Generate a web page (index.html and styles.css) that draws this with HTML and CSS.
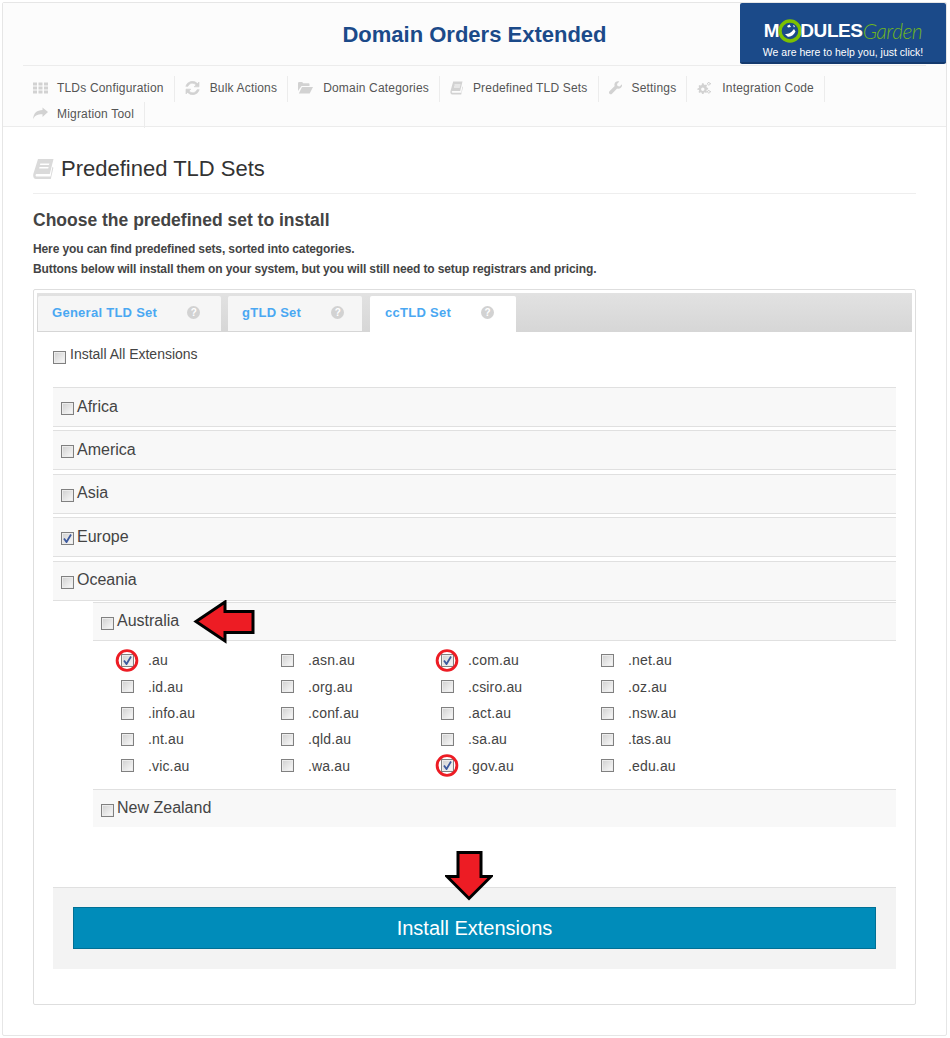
FILE: index.html
```html
<!DOCTYPE html>
<html lang="en">
<head>
<meta charset="utf-8">
<title>Predefined TLD Sets</title>
<link rel="stylesheet" href="styles.css">
</head>
<body>
<div class="frame">
  <header class="top">
    <div class="top-inner"><h1 class="app-title">Domain Orders Extended</h1></div>
    <a class="logo">
      <span class="logo-mark"><span class="w">M</span><svg class="ring" viewBox="0 0 24 24" width="24" height="24"><circle cx="12" cy="12" r="10" fill="#1b4a89" stroke="#7cc100" stroke-width="3.400"/><path d="M7 15c4 0 6-1 9-5l1.500 2.500c-1.500 3.500-5 6-8 5zM9 7l2.500-1.500L13 8l-3 .5zM15 6l2 1-1 1.500z" fill="#fff"/></svg><span class="w">DULES</span><span class="g">Garden</span></span>
      <span class="logo-sub">We are here to help you, just click!</span>
    </a>
  </header>
  <nav class="nav">
    <a class="nav-item"><svg class="ico ico-first" viewBox="0 0 15 14"><path d="M0 1.500h4v3H0zM5.500 1.500h4v3h-4zM11 1.500h4v3h-4zM0 5.500h4v3H0zM5.500 5.500h4v3h-4zM11 5.500h4v3h-4zM0 9.500h4v3H0zM5.500 9.500h4v3h-4zM11 9.500h4v3h-4z"/></svg>TLDs Configuration</a>
    <a class="nav-item"><svg class="ico ico-bold" viewBox="0 0 15 14"><path d="M14 1v4.800H9.200l1.800-1.800A4.700 4.700 0 0 0 3 5.300H.8A6.800 6.800 0 0 1 12.400 2.600zM1 13V8.200h4.800L4 10a4.700 4.700 0 0 0 8-1.300h2.200A6.800 6.800 0 0 1 2.600 11.400z"/></svg>Bulk Actions</a>
    <a class="nav-item"><svg class="ico" viewBox="0 0 15 14"><path d="M0 10V2.300C0 1.600.500 1 1.200 1h3l1 1.300h5.300c.7 0 1 .5 1 1.100V5H3.500L0 10zM.8 12.500 4 6h11l-3.300 6.500z"/></svg>Domain Categories</a>
    <a class="nav-item"><svg class="ico ico-narrow" viewBox="0 0 13 13"><path d="M3.200 0h9.300l-2.300 9.500H2.400c-.9 0-1 1.800.2 1.800h8.700l1.100-6.300.6.600-1.800 7.400H2C.5 13 .1 11.200.5 9.600zM4.500 3v1h5.800l.2-1zM4 5v1h5.800l.2-1z"/></svg>Predefined TLD Sets</a>
    <a class="nav-item"><svg class="ico ico-narrow" viewBox="0 0 13 14"><path d="M13 3.200 10.600 5.500 8.500 5 8 2.900 10.300.5C8.400-.4 5.900.6 5.500 3c-.2.800 0 1.500.2 2.100L.5 10.300c-.7.700-.7 1.800 0 2.500s1.800.7 2.500 0l5.100-5.300c2.700.9 5.700-1.400 4.900-4.300z"/></svg>Settings</a>
    <a class="nav-item"><svg class="ico" viewBox="0 0 15 14"><path d="M5 2.200h1.600l.3 1.300 1 .5 1.200-.6 1 1.100-.7 1.100.4 1 1.300.3v1.600l-1.300.3-.4 1 .7 1.100-1.100 1.100-1.100-.7-1 .4-.3 1.300H5l-.3-1.300-1-.4-1.100.7-1.100-1.100.7-1.100-.4-1L.5 9V7.400l1.300-.3.4-1-.7-1.100 1.100-1.100 1.100.6 1-.5zM5.800 6.500a1.700 1.700 0 1 0 0 3.400 1.700 1.700 0 0 0 0-3.400zM12.300 1l.6.900 1.100.2v1.200l-1.100.3-.6.9h-1.200l-.5-.9-.6-.3V2.100l.6-.2.5-.9zM11.700 2a.8.800 0 1 0 0 1.600.8.800 0 0 0 0-1.600zM12.300 9l.6.900 1.100.2v1.200l-1.100.3-.6.9h-1.200l-.5-.9-.6-.3v-1.200l.6-.2.5-.9zM11.700 10a.8.800 0 1 0 0 1.600.8.800 0 0 0 0-1.600z"/></svg>Integration Code</a>
    <a class="nav-item"><svg class="ico ico-first" viewBox="0 0 15 14"><path d="M15 5 9.500.5v2.600C4 3.300.5 6 0 12.500c1.300-3.500 4-5.200 9.500-5.200v2.600z"/></svg>Migration Tool</a>
  </nav>
  <main class="content">
    <h2 class="page-title"><svg class="title-ico" viewBox="0 0 21 20"><path d="M5 0h15.500l-3.700 15H3.700c-1.500 0-1.600 2.600.3 2.600h13.600l1.800-9.800 1 .9L17.800 20H3c-2.400 0-3.300-2.600-2.600-5.200zM7.300 4.500 7 6h9l.4-1.500zM6.500 8 6.200 9.500h9L15.600 8z"/></svg>Predefined TLD Sets</h2>
    <h3 class="sub-title">Choose the predefined set to install</h3>
    <p class="intro">Here you can find predefined sets, sorted into categories.<br>Buttons below will install them on your system, but you will still need to setup registrars and pricing.</p>
    <section class="panel">
      <div class="tabs">
        <a class="tab tab-general">General TLD Set<span class="help">?</span></a>
        <a class="tab tab-gtld">gTLD Set<span class="help">?</span></a>
        <a class="tab tab-active">ccTLD Set<span class="help">?</span></a>
      </div>
      <div class="tab-body">
        <label class="all"><input class="cb" type="checkbox">Install All Extensions</label>
        <div class="group"><label><input class="cb" type="checkbox">Africa</label></div>
        <div class="group"><label><input class="cb" type="checkbox">America</label></div>
        <div class="group"><label><input class="cb" type="checkbox">Asia</label></div>
        <div class="group"><label><input class="cb" type="checkbox" checked>Europe</label></div>
        <div class="group group-last"><label><input class="cb" type="checkbox">Oceania</label></div>
        <div class="country"><label><input class="cb" type="checkbox">Australia</label></div>
        <div class="tlds">
          <label class="tld"><input class="cb" type="checkbox" checked>.au</label>
          <label class="tld"><input class="cb" type="checkbox">.asn.au</label>
          <label class="tld"><input class="cb" type="checkbox" checked>.com.au</label>
          <label class="tld"><input class="cb" type="checkbox">.net.au</label>
          <label class="tld"><input class="cb" type="checkbox">.id.au</label>
          <label class="tld"><input class="cb" type="checkbox">.org.au</label>
          <label class="tld"><input class="cb" type="checkbox">.csiro.au</label>
          <label class="tld"><input class="cb" type="checkbox">.oz.au</label>
          <label class="tld"><input class="cb" type="checkbox">.info.au</label>
          <label class="tld"><input class="cb" type="checkbox">.conf.au</label>
          <label class="tld"><input class="cb" type="checkbox">.act.au</label>
          <label class="tld"><input class="cb" type="checkbox">.nsw.au</label>
          <label class="tld"><input class="cb" type="checkbox">.nt.au</label>
          <label class="tld"><input class="cb" type="checkbox">.qld.au</label>
          <label class="tld"><input class="cb" type="checkbox">.sa.au</label>
          <label class="tld"><input class="cb" type="checkbox">.tas.au</label>
          <label class="tld"><input class="cb" type="checkbox">.vic.au</label>
          <label class="tld"><input class="cb" type="checkbox">.wa.au</label>
          <label class="tld"><input class="cb" type="checkbox" checked>.gov.au</label>
          <label class="tld"><input class="cb" type="checkbox">.edu.au</label>
        </div>
        <div class="country country-nz"><label><input class="cb" type="checkbox">New Zealand</label></div>
        <div class="actions"><button class="install" type="button">Install Extensions</button></div>
      </div>
    </section>
  </main>
</div>
<svg class="mark arrow-left" viewBox="0 0 62 44"><path d="M3 21.500 32 2v9.500h28v21H32V41z" fill="#ed1c24" stroke="#000" stroke-width="3"/></svg>
<svg class="mark arrow-down" viewBox="0 0 48 50"><path d="M13 1.500h23v24h10L24 47.500 2 25.500h11z" fill="#ed1c24" stroke="#000" stroke-width="3"/></svg>
<svg class="mark ring-a" viewBox="0 0 24 24"><circle cx="12" cy="12" r="10.300" fill="none" stroke="#ed1c24" stroke-width="3"/></svg>
<svg class="mark ring-b" viewBox="0 0 24 24"><circle cx="12" cy="12" r="10.300" fill="none" stroke="#ed1c24" stroke-width="3"/></svg>
<svg class="mark ring-c" viewBox="0 0 24 24"><circle cx="12" cy="12" r="10.300" fill="none" stroke="#ed1c24" stroke-width="3"/></svg>
</body>
</html>
```
FILE: styles.css
```css
* { box-sizing: border-box; }
html, body { margin: 0; padding: 0; }
body {
  position: relative;
  width: 950px;
  height: 1038px;
  overflow: hidden;
  padding: 2px 3px 2px 2px;
  background: #fff;
  font-family: "Liberation Sans", Arial, sans-serif;
  color: #444;
}
.frame {
  position: relative;
  height: 1034px;
  background: #fff;
  border: 1px solid #e6e6e6;
  border-radius: 2px;
}
.top {
  height: 63px;
  padding: 0 20px;
  background: #fcfcfc;
}
.top-inner {
  height: 63px;
  border-bottom: 1px solid #ececec;
}
.app-title {
  margin: 0;
  padding-top: 19px;
  text-align: center;
  font-size: 22px;
  line-height: 26px;
  font-weight: 700;
  color: #1b4a89;
}
.logo {
  position: absolute;
  top: 0;
  right: 0;
  width: 206px;
  height: 61px;
  background: #1b4a89;
  border-bottom: 2px solid #143a6e;
  border-radius: 2px;
  display: flex;
  flex-direction: column;
  align-items: center;
  padding-top: 16px;
}
.logo-mark {
  display: flex;
  align-items: center;
  height: 24px;
  font-size: 19px;
  line-height: 24px;
  letter-spacing: -0.4px;
}
.logo-mark .w { color: #fff; font-weight: 700; }
.logo-mark .g {
  color: #6fb51f;
  font-family: Lato, "Liberation Sans", sans-serif;
  font-size: 21px;
  font-style: italic;
  font-weight: 300;
  letter-spacing: -0.5px;
}
.ring { margin: 0 -2px 0 -1px; flex: none; }
.logo-sub { margin-top: 3px; font-size: 10.500px; line-height: 13px; color: #fff; }
.nav {
  display: flex;
  flex-wrap: wrap;
  align-content: flex-start;
  height: 61px;
  padding: 10px 20px 0;
  background: #fcfcfc;
  border-bottom: 1px solid #ececec;
}
.nav-item {
  display: flex;
  align-items: center;
  height: 26px;
  padding: 0 10px 2px;
  font-size: 12px;
  letter-spacing: 0.18px;
  color: #555;
  border-right: 1px solid #ececec;
}
.ico { width: 15px; height: 14px; margin-right: 10px; fill: #d2d2d2; flex: none; }
.ico-first { margin-right: 9px; }
.ico-narrow { width: 13px; }
.ico-bold { stroke: #d2d2d2; stroke-width: 0.7; }
.content { padding: 0 30px; }
.page-title {
  display: flex;
  align-items: center;
  height: 67px;
  margin: 0;
  padding-top: 18px;
  font-size: 22px;
  font-weight: 400;
  color: #333;
  border-bottom: 1px solid #eee;
}
.title-ico { width: 21px; height: 20px; margin-right: 7px; fill: #dadada; }
.sub-title {
  margin: 16px 0 0;
  font-size: 17.500px;
  line-height: 20px;
  font-weight: 700;
  color: #444;
}
.intro {
  margin: 9px 0 0;
  font-size: 12px;
  line-height: 20px;
  font-weight: 700;
  letter-spacing: -0.115px;
  color: #444;
}
.panel {
  height: 716px;
  margin-top: 10px;
  padding: 3px;
  border: 1px solid #dedede;
  border-radius: 2px;
}
.tabs {
  display: flex;
  height: 39px;
  padding: 3px 0 0 1px;
  background: linear-gradient(#e2e2e2, #d6d6d6);
}
.tab {
  display: flex;
  align-items: center;
  height: 35px;
  padding: 0 0 3px 14px;
  font-size: 13px;
  font-weight: 700;
  letter-spacing: 0.27px;
  color: #4aa8f2;
  background: #f6f6f6;
  border-radius: 2px 2px 0 0;
}
.tab-general { width: 183px; margin-right: 7px; }
.tab-gtld { width: 134px; margin-right: 8px; }
.tab-active { width: 146px; height: 36px; background: #fff; padding-left: 15px; }
.help {
  display: block;
  width: 13px;
  height: 13px;
  margin-left: 30px;
  border-radius: 50%;
  background: #d2d2d2;
  color: #fff;
  font-size: 10px;
  line-height: 13px;
  text-align: center;
  letter-spacing: 0;
}
.tab-body { padding: 0 16px; }
.cb {
  appearance: none;
  -webkit-appearance: none;
  display: inline-block;
  width: 13px;
  height: 13px;
  margin: 0;
  border: 1px solid #808080;
  box-shadow: inset 0 0 0 1px #ececec;
  background: linear-gradient(135deg, #cfcfcf, #fbfbfb);
  flex: none;
}
.cb:checked {
  background:
    url("data:image/svg+xml,%3Csvg xmlns='http://www.w3.org/2000/svg' viewBox='0 0 13 13'%3E%3Cpath d='M3 6.500 5.500 10 10 2.500' fill='none' stroke='%233d5a9e' stroke-width='1.800'/%3E%3C/svg%3E") center/13px no-repeat,
    linear-gradient(135deg, #cfcfcf, #fbfbfb);
}
.all {
  display: flex;
  align-items: flex-start;
  height: 55px;
  padding-top: 14px;
  font-size: 14px;
  line-height: 16px;
}
.all .cb { margin: 5px 4px 0 0; }
.group {
  height: 40px;
  margin-bottom: 3.400px;
  padding-left: 8px;
  background: #f8f8f8;
  border-top: 1px solid #e0e0e0;
  border-bottom: 1px solid #e0e0e0;
  font-size: 16px;
}
.group label, .country label { display: flex; align-items: center; height: 37px; }
.group .cb, .country .cb { margin: 4px 3px 0 0; }
.group-last { margin-bottom: 1.400px; }
.country {
  height: 39px;
  margin-left: 40px;
  padding-left: 8px;
  background: #f8f8f8;
  border-top: 1px solid #e0e0e0;
  border-bottom: 1px solid #e0e0e0;
  font-size: 16px;
}
.country-nz { height: 38px; border-bottom: 0; }
.tlds {
  display: grid;
  grid-template-columns: repeat(4, 160px);
  grid-auto-rows: 26.300px;
  height: 148px;
  margin-left: 40px;
  padding: 6.400px 0 0 28px;
}
.tld {
  display: flex;
  align-items: center;
  font-size: 14px;
  letter-spacing: 0.15px;
}
.tld .cb { margin-right: 14px; }
.actions {
  margin-top: 60px;
  height: 82px;
  padding: 19px 20px;
  background: #f3f3f3;
  border-top: 1px solid #e0e0e0;
}
.install {
  display: block;
  width: 100%;
  height: 42px;
  padding: 2px 0 0;
  border: 1px solid #007095;
  background: #008cba;
  color: #fff;
  font-family: inherit;
  font-size: 20px;
}
.mark { position: absolute; display: block; }
.arrow-left { left: 193px; top: 600px; width: 62px; height: 44px; }
.arrow-down { left: 445px; top: 851px; width: 48px; height: 50px; }
.ring-a { left: 115px; top: 649px; width: 24px; height: 23px; }
.ring-b { left: 435px; top: 649px; width: 24px; height: 23px; }
.ring-c { left: 435px; top: 754px; width: 24px; height: 23px; }
```
